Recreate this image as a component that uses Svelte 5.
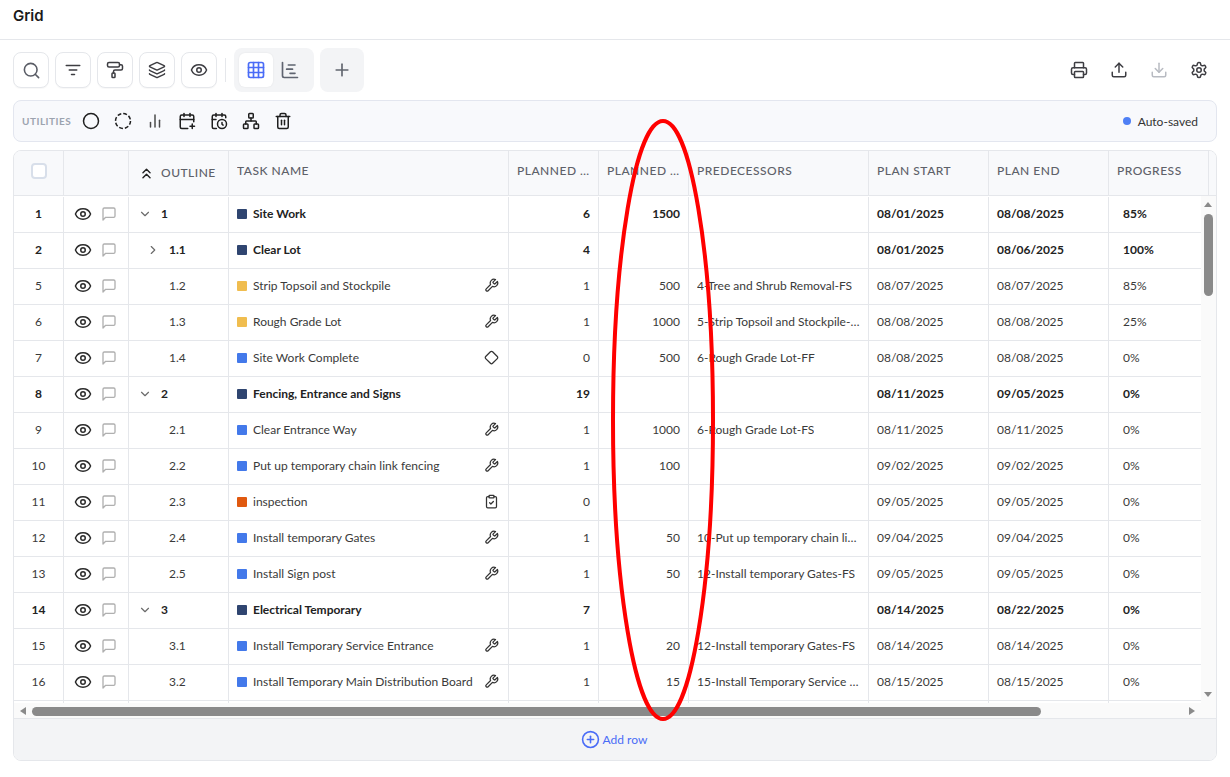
<script>
  const icons = {
    search: '<circle cx="11" cy="11" r="8"/><path d="m21 21-4.3-4.3"/>',
    filter: '<path d="M3 6h18"/><path d="M7 12h10"/><path d="M10 18h4"/>',
    roller: '<rect x="2" y="2" width="16" height="6" rx="2"/><path d="M10 16v-2a2 2 0 0 1 2-2h8a2 2 0 0 0 2-2V7a2 2 0 0 0-2-2h-2"/><rect x="8" y="16" width="4" height="6" rx="1"/>',
    layers: '<path d="M12.83 2.18a2 2 0 0 0-1.66 0L2.6 6.08a1 1 0 0 0 0 1.83l8.58 3.91a2 2 0 0 0 1.66 0l8.58-3.9a1 1 0 0 0 0-1.83z"/><path d="M2 12a1 1 0 0 0 .58.91l8.6 3.91a2 2 0 0 0 1.65 0l8.58-3.9A1 1 0 0 0 22 12"/><path d="M2 17a1 1 0 0 0 .58.91l8.6 3.91a2 2 0 0 0 1.65 0l8.58-3.9A1 1 0 0 0 22 17"/>',
    eye: '<path d="M2.062 12.348a1 1 0 0 1 0-.696 10.75 10.75 0 0 1 19.876 0 1 1 0 0 1 0 .696 10.75 10.75 0 0 1-19.876 0"/><circle cx="12" cy="12" r="3"/>',
    grid: '<rect x="3" y="3" width="18" height="18" rx="2"/><path d="M3 9h18M3 15h18M9 3v18M15 3v18"/>',
    gantt: '<path d="M10 6h8"/><path d="M12 16h6"/><path d="M3 3v16a2 2 0 0 0 2 2h16"/><path d="M8 11h7"/>',
    plus: '<path d="M5 12h14"/><path d="M12 5v14"/>',
    printer: '<path d="M6 18H4a2 2 0 0 1-2-2v-5a2 2 0 0 1 2-2h16a2 2 0 0 1 2 2v5a2 2 0 0 1-2 2h-2"/><path d="M6 9V3a1 1 0 0 1 1-1h10a1 1 0 0 1 1 1v6"/><rect x="6" y="14" width="12" height="8" rx="1"/>',
    upload: '<path d="M12 3v12"/><path d="m17 8-5-5-5 5"/><path d="M21 15v4a2 2 0 0 1-2 2H5a2 2 0 0 1-2-2v-4"/>',
    download: '<path d="M12 15V3"/><path d="M21 15v4a2 2 0 0 1-2 2H5a2 2 0 0 1-2-2v-4"/><path d="m7 10 5 5 5-5"/>',
    settings: '<path d="M12.22 2h-.44a2 2 0 0 0-2 2v.18a2 2 0 0 1-1 1.73l-.43.25a2 2 0 0 1-2 0l-.15-.08a2 2 0 0 0-2.73.73l-.22.38a2 2 0 0 0 .73 2.73l.15.1a2 2 0 0 1 1 1.72v.51a2 2 0 0 1-1 1.74l-.15.09a2 2 0 0 0-.73 2.73l.22.38a2 2 0 0 0 2.73.73l.15-.08a2 2 0 0 1 2 0l.43.25a2 2 0 0 1 1 1.73V20a2 2 0 0 0 2 2h.44a2 2 0 0 0 2-2v-.18a2 2 0 0 1 1-1.73l.43-.25a2 2 0 0 1 2 0l.15.08a2 2 0 0 0 2.73-.73l.22-.39a2 2 0 0 0-.73-2.73l-.15-.08a2 2 0 0 1-1-1.74v-.5a2 2 0 0 1 1-1.74l.15-.09a2 2 0 0 0 .73-2.73l-.22-.38a2 2 0 0 0-2.73-.73l-.15.08a2 2 0 0 1-2 0l-.43-.25a2 2 0 0 1-1-1.73V4a2 2 0 0 0-2-2z"/><circle cx="12" cy="12" r="3"/>',
    circle: '<circle cx="12" cy="12" r="10"/>',
    dashed: '<circle cx="12" cy="12" r="10" stroke-dasharray="5.2 2.65" stroke-linecap="butt"/>',
    bars: '<path d="M6 20v-6"/><path d="M12 20V4"/><path d="M18 20v-9"/>',
    calplus: '<path d="M8 2v4"/><path d="M16 2v4"/><path d="M21 13V6a2 2 0 0 0-2-2H5a2 2 0 0 0-2 2v14a2 2 0 0 0 2 2h8"/><path d="M3 10h18"/><path d="M16 19h6"/><path d="M19 16v6"/>',
    calclock: '<path d="M21 7.5V6a2 2 0 0 0-2-2H5a2 2 0 0 0-2 2v14a2 2 0 0 0 2 2h3.5"/><path d="M16 2v4"/><path d="M8 2v4"/><path d="M3 10h5"/><path d="M17.5 17.5 16 16.3V14"/><circle cx="16" cy="16" r="6"/>',
    network: '<rect x="16" y="16" width="6" height="6" rx="1"/><rect x="2" y="16" width="6" height="6" rx="1"/><rect x="9" y="2" width="6" height="6" rx="1"/><path d="M5 16v-3a1 1 0 0 1 1-1h12a1 1 0 0 1 1 1v3"/><path d="M12 12V8"/>',
    trash: '<path d="M3 6h18"/><path d="M19 6v14c0 1-1 2-2 2H7c-1 0-2-1-2-2V6"/><path d="M8 6V4c0-1 1-2 2-2h4c1 0 2 1 2 2v2"/><path d="M10 11v6"/><path d="M14 11v6"/>',
    comment: '<path d="M21 15a2 2 0 0 1-2 2H7l-4 4V5a2 2 0 0 1 2-2h14a2 2 0 0 1 2 2z"/>',
    chevronsUp: '<path d="m17 11-5-5-5 5"/><path d="m17 18-5-5-5 5"/>',
    down: '<path d="m6 9 6 6 6-6"/>',
    right: '<path d="m9 18 6-6-6-6"/>',
    wrench: '<path d="M14.7 6.3a1 1 0 0 0 0 1.4l1.6 1.6a1 1 0 0 0 1.4 0l3.77-3.77a6 6 0 0 1-7.94 7.94l-6.91 6.91a2.12 2.12 0 0 1-3-3l6.91-6.91a6 6 0 0 1 7.94-7.94l-3.76 3.76z"/>',
    diamond: '<path d="M2.7 10.3a2.41 2.41 0 0 0 0 3.41l7.59 7.59a2.41 2.41 0 0 0 3.41 0l7.59-7.59a2.41 2.41 0 0 0 0-3.41l-7.59-7.59a2.41 2.41 0 0 0-3.41 0Z"/>',
    clipboard: '<rect x="8" y="2" width="8" height="4" rx="1"/><path d="M16 4h2a2 2 0 0 1 2 2v14a2 2 0 0 1-2 2H6a2 2 0 0 1-2-2V6a2 2 0 0 1 2-2h2"/><path d="m9 14 2 2 4-4"/>',
    circlePlus: '<circle cx="12" cy="12" r="10"/><path d="M8 12h8"/><path d="M12 8v8"/>'
  };

  const tools = ['search', 'filter', 'roller', 'layers', 'eye'];
  const utilities = ['circle', 'dashed', 'bars', 'calplus', 'calclock', 'network', 'trash'];
  const columns = ['', '', 'OUTLINE', 'TASK NAME', 'PLANNED DURATION', 'PLANNED COST', 'PREDECESSORS', 'PLAN START', 'PLAN END', 'PROGRESS'];

  const rows = [
    { n: 1, o: '1', lvl: 0, open: 'down', bold: true, c: 'navy', t: 'Site Work', d: 6, q: 1500, p: '', s: '08/01/2025', e: '08/08/2025', g: '85%' },
    { n: 2, o: '1.1', lvl: 1, open: 'right', bold: true, c: 'navy', t: 'Clear Lot', d: 4, q: '', p: '', s: '08/01/2025', e: '08/06/2025', g: '100%' },
    { n: 5, o: '1.2', lvl: 1, c: 'yellow', t: 'Strip Topsoil and Stockpile', i: 'wrench', d: 1, q: 500, p: '4-Tree and Shrub Removal-FS', s: '08/07/2025', e: '08/07/2025', g: '85%' },
    { n: 6, o: '1.3', lvl: 1, c: 'yellow', t: 'Rough Grade Lot', i: 'wrench', d: 1, q: 1000, p: '5-Strip Topsoil and Stockpile-FS', s: '08/08/2025', e: '08/08/2025', g: '25%' },
    { n: 7, o: '1.4', lvl: 1, c: 'blue', t: 'Site Work Complete', i: 'diamond', d: 0, q: 500, p: '6-Rough Grade Lot-FF', s: '08/08/2025', e: '08/08/2025', g: '0%' },
    { n: 8, o: '2', lvl: 0, open: 'down', bold: true, c: 'navy', t: 'Fencing, Entrance and Signs', d: 19, q: '', p: '', s: '08/11/2025', e: '09/05/2025', g: '0%' },
    { n: 9, o: '2.1', lvl: 1, c: 'blue', t: 'Clear Entrance Way', i: 'wrench', d: 1, q: 1000, p: '6-Rough Grade Lot-FS', s: '08/11/2025', e: '08/11/2025', g: '0%' },
    { n: 10, o: '2.2', lvl: 1, c: 'blue', t: 'Put up temporary chain link fencing', i: 'wrench', d: 1, q: 100, p: '', s: '09/02/2025', e: '09/02/2025', g: '0%' },
    { n: 11, o: '2.3', lvl: 1, c: 'orange', t: 'inspection', i: 'clipboard', d: 0, q: '', p: '', s: '09/05/2025', e: '09/05/2025', g: '0%' },
    { n: 12, o: '2.4', lvl: 1, c: 'blue', t: 'Install temporary Gates', i: 'wrench', d: 1, q: 50, p: '10-Put up temporary chain link fencing-FS', s: '09/04/2025', e: '09/04/2025', g: '0%' },
    { n: 13, o: '2.5', lvl: 1, c: 'blue', t: 'Install Sign post', i: 'wrench', d: 1, q: 50, p: '12-Install temporary Gates-FS', s: '09/05/2025', e: '09/05/2025', g: '0%' },
    { n: 14, o: '3', lvl: 0, open: 'down', bold: true, c: 'navy', t: 'Electrical Temporary', d: 7, q: '', p: '', s: '08/14/2025', e: '08/22/2025', g: '0%' },
    { n: 15, o: '3.1', lvl: 1, c: 'blue', t: 'Install Temporary Service Entrance', i: 'wrench', d: 1, q: 20, p: '12-Install temporary Gates-FS', s: '08/14/2025', e: '08/14/2025', g: '0%' },
    { n: 16, o: '3.2', lvl: 1, c: 'blue', t: 'Install Temporary Main Distribution Board', i: 'wrench', d: 1, q: 15, p: '15-Install Temporary Service Entrance-FS', s: '08/15/2025', e: '08/15/2025', g: '0%' }
  ];
</script>

{#snippet icon(name, size = 18)}
  <svg width={size} height={size} viewBox="0 0 24 24" fill="none" stroke="currentColor" stroke-width="2" stroke-linecap="round" stroke-linejoin="round">{@html icons[name]}</svg>
{/snippet}

<div class="page">
  <header class="title">Grid</header>

  <div class="toolbar">
    {#each tools as t}
      <button class="tool" class:soft={t === 'search'}>{@render icon(t, t === 'search' ? 19 : 18)}</button>
    {/each}
    <span class="divider"></span>
    <div class="views">
      <button class="view active">{@render icon('grid', 20)}</button>
      <button class="view">{@render icon('gantt', 20)}</button>
    </div>
    <button class="add-view">{@render icon('plus', 20)}</button>
    <div class="actions">
      <span>{@render icon('printer')}</span>
      <span>{@render icon('upload')}</span>
      <span class="muted">{@render icon('download')}</span>
      <span>{@render icon('settings')}</span>
    </div>
  </div>

  <div class="utilities">
    <span class="util-label">UTILITIES</span>
    <div class="util-icons">
      {#each utilities as u}
        <span class:soft={u === 'bars'}>{@render icon(u)}</span>
      {/each}
    </div>
    <div class="saved"><i></i>Auto-saved</div>
  </div>

  <div class="table">
    <div class="row head">
      {#each columns as c, i}
        <div class="cell">
          {#if i === 0}
            <span class="check"></span>
          {:else if i === 2}
            <span class="collapse">{@render icon('chevronsUp', 17)}</span><span class="outline-label">{c}</span>
          {:else}
            <span class="ellip">{c}</span>
          {/if}
        </div>
      {/each}
      <div class="cell filler"></div>
    </div>

    <div class="scroll">
      <div class="rows">
        {#each rows as r}
          <div class="row" class:bold={r.bold}>
            <div class="cell center">{r.n}</div>
            <div class="cell marks">
              {@render icon('eye')}
              <span class="comment">{@render icon('comment', 16)}</span>
            </div>
            <div class="cell outline" class:deep={r.lvl === 1}>
              {#if r.open}<span class="chev">{@render icon(r.open, 14)}</span>{/if}
              <span class="o-text">{r.o}</span>
            </div>
            <div class="cell task">
              <i class="swatch {r.c}"></i>
              <span class="ellip grow">{r.t}</span>
              {#if r.i}{@render icon(r.i, 15)}{/if}
            </div>
            <div class="cell right">{r.d}</div>
            <div class="cell right">{r.q}</div>
            <div class="cell"><span class="ellip">{r.p}</span></div>
            <div class="cell">{r.s}</div>
            <div class="cell">{r.e}</div>
            <div class="cell progress">{r.g}</div>
          </div>
        {/each}
        <div class="row">
          {#each columns as c}<div class="cell"></div>{/each}
        </div>
      </div>

      <div class="vbar">
        <b class="arrow up"></b>
        <b class="vthumb"></b>
        <b class="arrow dn"></b>
      </div>
      <div class="hbar">
        <b class="arrow lf"></b>
        <b class="hthumb"></b>
        <b class="arrow rt"></b>
      </div>
    </div>

    <div class="add-row">{@render icon('circlePlus', 19)}Add row</div>
  </div>

  <svg class="mark" width="1230" height="777" viewBox="0 0 1230 777" fill="none">
    <ellipse cx="663" cy="420" rx="50" ry="299" stroke="#f00" stroke-width="4" />
  </svg>
</div>

<style>
  :global(body) { margin: 0; background: #fff; }
  .page {
    position: relative;
    width: 1230px;
    height: 777px;
    overflow: hidden;
    font-family: Lato, "Liberation Sans", sans-serif;
    font-size: 12px;
    color: #3a3a3a;
  }
  .title {
    height: 40px;
    box-sizing: border-box;
    border-bottom: 1px solid #e5e7eb;
    padding: 6px 13px 0;
    font-family: Inter, sans-serif;
    font-size: 15px;
    font-weight: 600;
    line-height: 20px;
    color: #1a1a1a;
  }
  button { border: none; padding: 0; background: none; color: inherit; display: flex; align-items: center; justify-content: center; }

  .toolbar { display: flex; align-items: center; height: 44px; margin: 8px 13px 0; }
  .tool {
    width: 36px;
    height: 36px;
    box-sizing: border-box;
    margin-right: 6px;
    border: 1px solid #e5e7eb;
    border-radius: 8px;
    background: #fff;
    color: #3d3d42;
    box-shadow: 0 1px 1px rgba(0, 0, 0, 0.03);
  }
  .tool.soft { color: #5a5d66; }
  .divider { width: 1px; height: 24px; background: #e5e7eb; margin: 0 8px 0 2px; }
  .views { display: flex; width: 80px; height: 44px; box-sizing: border-box; padding: 5px; background: #f3f4f6; border-radius: 8px; }
  .view { width: 34px; height: 34px; color: #5f6470; border-radius: 6px; }
  .view.active { background: #fff; color: #4a6cf7; box-shadow: 0 0 2px rgba(0, 0, 0, 0.08); }
  .add-view { width: 44px; height: 44px; margin-left: 6px; background: #f3f4f6; border-radius: 8px; color: #62666f; }
  .actions { margin-left: auto; display: flex; margin-right: -2px; color: #3d3d42; }
  .actions span { width: 40px; display: flex; justify-content: center; align-items: center; }
  .actions .muted { color: #b8bbc2; }

  .utilities {
    display: flex;
    align-items: center;
    height: 42px;
    box-sizing: border-box;
    margin: 8px 13px 0;
    padding: 0 18px 0 8px;
    background: #f8f9fc;
    border: 1px solid #e3e6ef;
    border-radius: 8px;
  }
  .util-label { font-size: 10px; font-weight: 700; letter-spacing: 0.5px; color: #9ca3af; width: 53px; }
  .util-icons { display: flex; color: #1f1f1f; }
  .util-icons span { width: 32px; display: flex; justify-content: center; }
  .util-icons .soft { color: #4a4a4a; }
  .saved { margin-left: auto; display: flex; align-items: center; gap: 7px; color: #333; }
  .saved i { width: 8px; height: 8px; border-radius: 50%; background: #4f80f5; }

  .table {
    display: flex;
    flex-direction: column;
    height: 611px;
    box-sizing: border-box;
    margin: 8px 13px 0;
    border: 1px solid #e5e7eb;
    border-radius: 8px;
    overflow: hidden;
  }
  .row {
    display: grid;
    grid-template-columns: 50px 65px 100px 280px 90px 90px 180px 120px 120px 100px;
    flex: none;
    height: 36px;
    box-sizing: border-box;
    border-bottom: 1px solid #e5e7eb;
  }
  .row.bold { font-weight: 700; color: #222; }
  .cell {
    display: flex;
    align-items: center;
    box-sizing: border-box;
    min-width: 0;
    padding: 0 8px 2px;
    border-right: 1px solid #e5e7eb;
    white-space: nowrap;
  }
  .ellip { overflow: hidden; text-overflow: ellipsis; white-space: nowrap; min-width: 0; }
  .grow { flex: 1; }
  .center { justify-content: center; }
  .right { justify-content: flex-end; }

  .head {
    height: 45px;
    grid-template-columns: 50px 65px 100px 280px 90px 90px 180px 120px 120px 100px 9px;
    background: #f8f9fb;
    color: #5e6169;
    font-weight: 500;
    letter-spacing: 0.5px;
  }
  .head .cell { padding-bottom: 5px; }
  .head .cell:first-child { justify-content: center; }
  .filler { border-right: none; padding: 0; }
  .check { width: 16px; height: 16px; box-sizing: border-box; border: 2px solid #d8dfea; border-radius: 4px; background: #fff; }
  .collapse { display: flex; color: #222; margin: 0 6px 0 1px; position: relative; top: 3px; }
  .outline-label { position: relative; top: 2px; }

  .scroll {
    display: grid;
    grid-template-columns: 1187px 15px;
    grid-template-rows: 507px 15px;
    flex: none;
    background: #fafafa;
    border-bottom: 1px solid #e5e7eb;
  }
  .rows { overflow: hidden; background: #fff; padding-top: 1px; }
  .marks { padding-left: 10px; gap: 9px; color: #2b2b2b; }
  .comment { display: flex; color: #b0b0b0; }
  .outline { padding-left: 0; position: relative; }
  .o-text { position: absolute; left: 32px; }
  .deep .o-text { left: 40px; }
  .chev { position: absolute; left: 9px; display: flex; color: #6b6b6b; }
  .deep .chev { left: 17px; }
  .task { gap: 6px; padding-left: 8px; padding-right: 9px; }
  .swatch { width: 10px; height: 10px; flex: none; border-radius: 1px; }
  .navy { background: #2f4570; }
  .yellow { background: #f0bd4f; }
  .blue { background: #4379ea; }
  .orange { background: #e0590f; }
  .task svg { color: #333; flex: none; }
  .progress { padding-left: 14px; }

  .vbar { position: relative; }
  .hbar { position: relative; grid-column: 1 / 3; }
  .arrow { position: absolute; width: 0; height: 0; border: 4px solid transparent; }
  .up { top: 6px; left: 3px; border-bottom: 5px solid #8a8a8a; border-top: none; }
  .dn { bottom: 6px; left: 3px; border-top: 5px solid #8a8a8a; border-bottom: none; }
  .lf { left: 6px; top: 4px; border-right: 6px solid #8a8a8a; border-left: none; }
  .rt { right: 21px; top: 4px; border-left: 6px solid #8a8a8a; border-right: none; }
  .vthumb { position: absolute; left: 3px; top: 18px; width: 9px; height: 82px; border-radius: 5px; background: #8a8a8a; }
  .hthumb { position: absolute; left: 18px; top: 4px; width: 1009px; height: 9px; border-radius: 5px; background: #8a8a8a; }

  .add-row {
    flex: 1;
    display: flex;
    align-items: center;
    justify-content: center;
    gap: 3px;
    padding-right: 2px;
    background: #f3f4f6;
    color: #4a6cf7;
  }
  .mark { position: absolute; left: 0; top: 0; pointer-events: none; }
</style>
